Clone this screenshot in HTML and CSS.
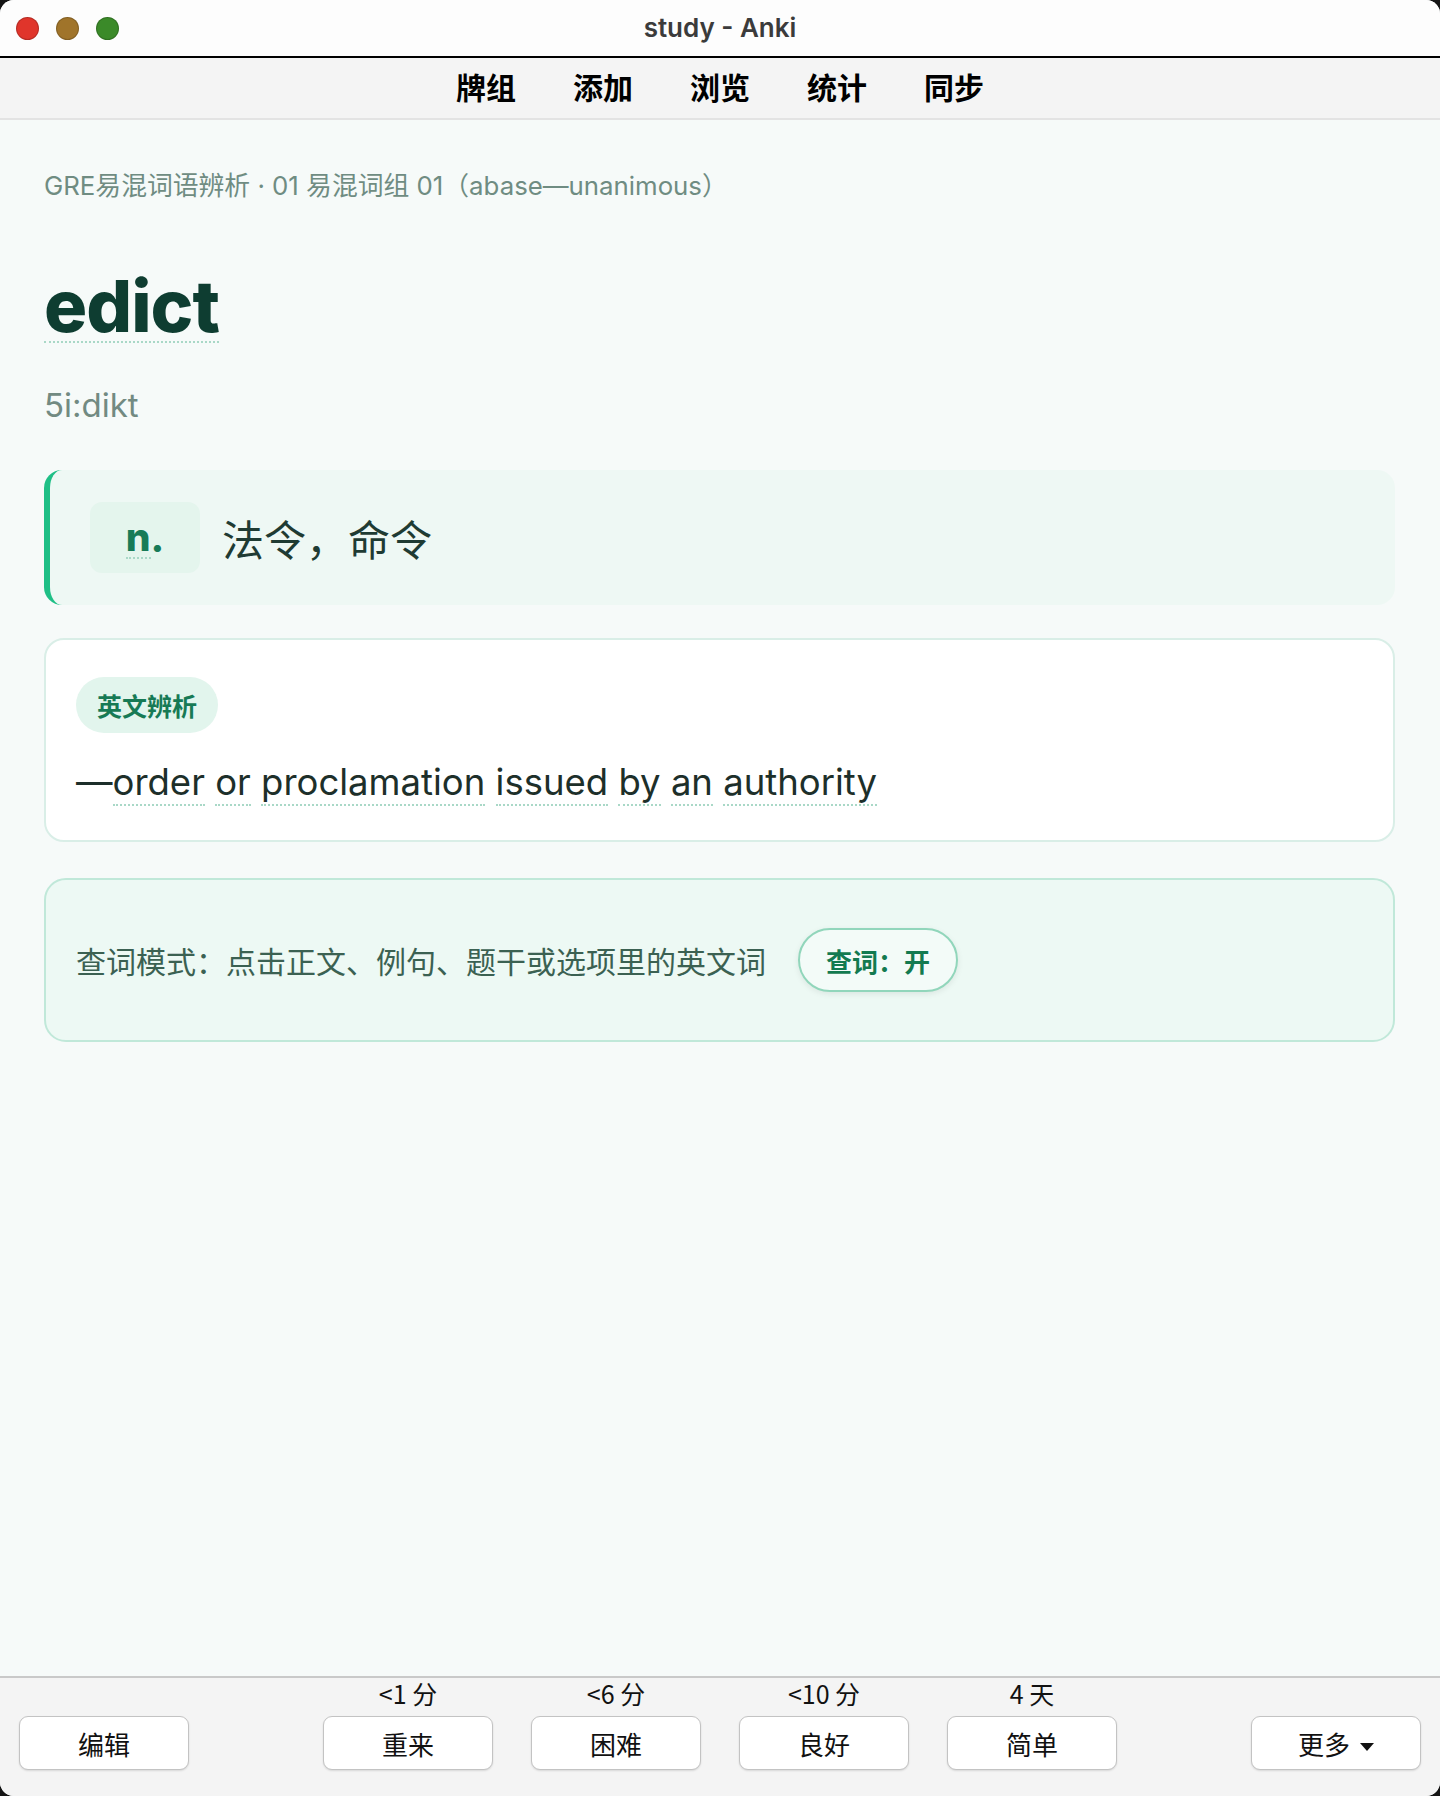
FILE: index.html
```html
<!DOCTYPE html>
<html lang="zh-CN">
<head>
    <meta charset="UTF-8">
    <meta name="viewport" content="width=device-width, initial-scale=1.0">
    <title>study - Anki</title>
    <link rel="stylesheet" href="styles.css">
</head>
<body>
    <div class="window">
        <div class="titlebar">
            <div class="lights">
                <span class="light red"></span>
                <span class="light yellow"></span>
                <span class="light green"></span>
            </div>
            <div class="title">study - Anki</div>
            <div></div>
        </div>

        <nav class="toolbar">
            <a>牌组</a>
            <a>添加</a>
            <a>浏览</a>
            <a>统计</a>
            <a>同步</a>
        </nav>

        <main class="content">
            <div class="crumb">GRE易混词语辨析 · 01 易混词组 01（abase—unanimous）</div>
            <h1 class="word"><span>edict</span></h1>
            <div class="phon">5i:dikt</div>

            <div class="def">
                <div class="pos"><span class="w">n</span>.</div>
                <div class="meaning">法令，命令</div>
            </div>

            <div class="card">
                <span class="label">英文辨析</span>
                <p class="en">—<span class="w">order</span> <span class="w">or</span> <span class="w">proclamation</span> <span class="w">issued</span> <span class="w">by</span> <span class="w">an</span> <span class="w">authority</span></p>
            </div>

            <div class="lookup">
                <span class="hint">查词模式：点击正文、例句、题干或选项里的英文词</span>
                <button class="toggle">查词：开</button>
            </div>
        </main>

        <footer class="answers">
            <div class="side left">
                <button class="btn">编辑</button>
            </div>
            <div class="ease">
                <div class="choice">
                    <span class="due">&lt;1 分</span>
                    <button class="btn">重来</button>
                </div>
                <div class="choice">
                    <span class="due">&lt;6 分</span>
                    <button class="btn">困难</button>
                </div>
                <div class="choice">
                    <span class="due">&lt;10 分</span>
                    <button class="btn">良好</button>
                </div>
                <div class="choice">
                    <span class="due">4 天</span>
                    <button class="btn">简单</button>
                </div>
            </div>
            <div class="side right">
                <button class="btn">更多 <span class="caret"></span></button>
            </div>
        </footer>
    </div>
</body>
</html>
```

FILE: styles.css
```css
body {
    margin: 0;
    background: #151515;
    font-family: Inter, "Noto Sans CJK SC", sans-serif;
}

.window {
    height: 1796px;
    border-radius: 14px;
    overflow: hidden;
    display: flex;
    flex-direction: column;
    background: #f6faf9;
}

/* title bar */
.titlebar {
    height: 56px;
    background: #fdfdfd;
    border-bottom: 2px solid #000;
    display: grid;
    grid-template-columns: 1fr auto 1fr;
    align-items: center;
}

.lights {
    display: flex;
    gap: 17px;
    padding-left: 16px;
}

.light {
    width: 21px;
    height: 21px;
    border-radius: 50%;
    border: 1.5px solid rgba(0, 0, 0, 0.18);
}

.red { background: #e0352b; }
.yellow { background: #a0742a; }
.green { background: #3b8a29; }

.title {
    font-size: 26px;
    font-weight: 600;
    color: #3b3b3b;
    margin-top: -2px;
}

/* top toolbar */
.toolbar {
    height: 60px;
    background: #f4f4f4;
    border-bottom: 2px solid #e3e3e3;
    display: flex;
    justify-content: center;
    align-items: center;
    gap: 57px;
}

.toolbar a {
    font-family: "Noto Sans CJK SC", sans-serif;
    font-size: 30px;
    font-weight: 700;
    color: #000;
    margin-top: -4px;
}

/* card content */
.content {
    flex: 1;
    padding: 50px 45px 0 44px;
}

.crumb {
    font-size: 25.8px;
    line-height: 32px;
    color: #6f8c82;
}

.word {
    margin: 69px 0 0;
    font-size: 72px;
    font-weight: 800;
    line-height: 70px;
    letter-spacing: -1px;
    color: #0e3d31;
}

.word span {
    display: inline-block;
    border-bottom: 2px dotted #a9d8c7;
}

.phon {
    margin-top: 42px;
    font-size: 33px;
    line-height: 40px;
    color: #728a82;
}

.def {
    margin-top: 45px;
    display: flex;
    align-items: center;
    gap: 22px;
    padding: 32px 40px;
    background: #eef8f4;
    border-left: 6px solid #1fbf86;
    border-radius: 18px;
}

.pos {
    width: 110px;
    height: 71px;
    display: flex;
    justify-content: center;
    align-items: center;
    background: #e4f5ed;
    border-radius: 12px;
    font-size: 39px;
    font-weight: 800;
    color: #177b57;
}

.pos .w {
    border-bottom: 2px dotted #a9d8c7;
    line-height: 40px;
}

.meaning {
    font-family: "Noto Sans CJK SC", sans-serif;
    font-size: 42px;
    color: #1f3b33;
}

.card {
    margin-top: 33px;
    padding: 37px 30px 32px;
    background: #fff;
    border: 2px solid #d9eee7;
    border-radius: 20px;
}

.label {
    display: inline-flex;
    align-items: center;
    height: 56px;
    padding: 0 21px;
    border-radius: 28px;
    background: #e2f5ed;
    font-family: "Noto Sans CJK SC", sans-serif;
    font-size: 25px;
    font-weight: 700;
    color: #177a55;
}

.en {
    margin: 23px 0 0;
    font-size: 36.5px;
    line-height: 52px;
    color: #1d2f2a;
}

.en .w {
    border-bottom: 2px dotted #a9d8c7;
}

.lookup {
    margin-top: 36px;
    height: 160px;
    padding: 0 30px;
    display: flex;
    align-items: center;
    gap: 32px;
    background: #edf9f4;
    border: 2px solid #c0e8d9;
    border-radius: 22px;
}

.hint {
    font-family: "Noto Sans CJK SC", sans-serif;
    font-size: 30px;
    color: #3b6152;
}

.toggle {
    height: 64px;
    padding: 0 26px;
    background: #f3fbf8;
    border: 2px solid #91d6bb;
    border-radius: 32px;
    box-shadow: 0 2px 6px rgba(0, 0, 0, 0.08);
    font-family: "Noto Sans CJK SC", sans-serif;
    font-size: 26px;
    font-weight: 700;
    color: #137a50;
}

/* answer bar */
.answers {
    height: 120px;
    box-sizing: border-box;
    padding: 0 19px 27px 19px;
    background: #f4f4f4;
    border-top: 2px solid #c9c9c9;
    display: grid;
    grid-template-columns: 1fr auto 1fr;
    align-items: end;
}

.right {
    display: flex;
    justify-content: flex-end;
}

.ease {
    display: flex;
    gap: 38px;
}

.choice {
    display: flex;
    flex-direction: column;
    align-items: center;
    gap: 8px;
}

.due {
    font-family: "Noto Sans CJK SC", sans-serif;
    font-size: 25px;
    line-height: 30px;
    color: #111;
}

.btn {
    width: 170px;
    height: 54px;
    background: #fff;
    border: 1px solid #c3c3c3;
    border-radius: 9px;
    box-shadow: 0 1px 2px rgba(0, 0, 0, 0.12);
    font-family: "Noto Sans CJK SC", sans-serif;
    font-size: 26px;
    color: #111;
}

.caret {
    display: inline-block;
    margin-left: 4px;
    vertical-align: middle;
    border-left: 7px solid transparent;
    border-right: 7px solid transparent;
    border-top: 8px solid #111;
}
```
